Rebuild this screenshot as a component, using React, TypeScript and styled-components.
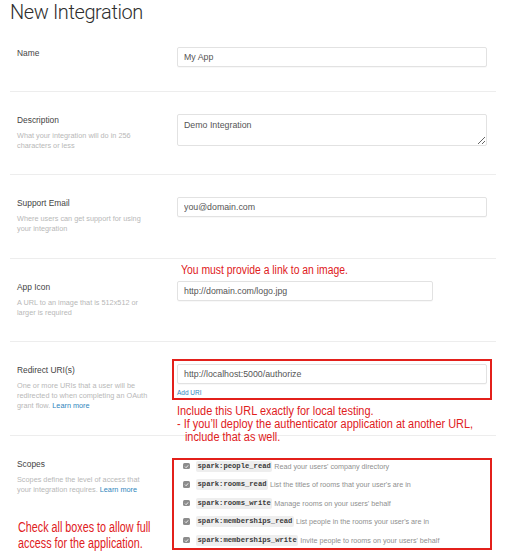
import styled, { createGlobalStyle } from "styled-components"

const GlobalStyle = createGlobalStyle`
  body {
    margin: 0;
    background: #fff;
    font-family: "Liberation Sans", Arial, sans-serif;
  }
`

const Page = styled.div`
  padding-left: 10px;
  width: 486px;
  height: 552px;
  overflow: hidden;
`

const Title = styled.h1`
  margin: 0;
  font-family: Roboto, "Liberation Sans", sans-serif;
  font-weight: 300;
  font-size: 20px;
  line-height: 25px;
  letter-spacing: -0.4px;
  color: #2e2e2e;
`

const Section = styled.div`
  display: grid;
  grid-template-columns: 167px 310px;
  padding: 22px 0 23.5px;
  border-bottom: 1px solid #ededed;
  &:last-child {
    border-bottom: none;
  }
`

const LabelCol = styled.div`
  position: relative;
  padding-left: 7px;
`

const Label = styled.div`
  font-size: 8.4px;
  line-height: 12px;
  color: #444;
`

const Hint = styled.div`
  margin-top: 5px;
  width: 136px;
  font-size: 7.3px;
  line-height: 10px;
  color: #b8b8b8;
`

const Link = styled.span`
  color: #2f86bd;
`

const Field = styled.div`
  position: relative;
`

const TextInput = styled.input<{ $width?: number }>`
  display: block;
  box-sizing: border-box;
  width: ${(p) => p.$width ?? 310}px;
  height: 20px;
  margin: 0;
  padding: 0 6px;
  border: 1px solid #e2e2e2;
  border-radius: 2px;
  box-shadow: 0 1px 1px rgba(0, 0, 0, 0.03);
  font-family: "Liberation Sans", Arial, sans-serif;
  font-size: 8.8px;
  color: #555;
  outline: none;
`

const TextArea = styled.textarea`
  display: block;
  box-sizing: border-box;
  width: 310px;
  height: 32px;
  margin: 0;
  padding: 5px 6px;
  border: 1px solid #e2e2e2;
  border-radius: 2px;
  font-family: "Liberation Sans", Arial, sans-serif;
  font-size: 8.8px;
  color: #555;
  outline: none;
`

const RedBox = styled.div`
  box-sizing: border-box;
  width: 320px;
  margin: -5px 0 0 -5px;
  padding: 3px 3px 1px;
  border: 2px solid #e3201b;
`

const AddUri = styled(Link)`
  display: block;
  margin-top: 4px;
  font-size: 6.5px;
  line-height: 9px;
`

// red annotations are narrow in the screenshot, so the regular face is squeezed
const Note = styled.div<{ $top: number; $left: number; $size: number; $lh: number; $scale: number }>`
  position: absolute;
  top: ${(p) => p.$top}px;
  left: ${(p) => p.$left}px;
  white-space: nowrap;
  transform: scaleX(${(p) => p.$scale});
  transform-origin: 0 0;
  font-family: "Liberation Sans", Arial, sans-serif;
  font-size: ${(p) => p.$size}px;
  line-height: ${(p) => p.$lh}px;
  color: #e0201c;
`

const NoteLine = styled.div<{ $indent?: number }>`
  padding-left: ${(p) => p.$indent ?? 0}px;
`

const ScopeBox = styled.div`
  box-sizing: border-box;
  width: 320px;
  margin: 0.5px 0 0 -5px;
  padding: 0 3px 2px 9px;
  border: 2px solid #e3201b;
  display: flex;
  flex-direction: column;
  gap: 6.5px;
`

const ScopeRow = styled.div`
  display: flex;
  align-items: center;
  height: 12px;
`

const Check = styled.span`
  display: flex;
  align-items: center;
  justify-content: center;
  width: 6.5px;
  height: 6.5px;
  margin-right: 6.5px;
  border-radius: 1.5px;
  background: #8c8c8c;
`

const Code = styled.code`
  padding: 1px 1.5px;
  border-radius: 2px;
  background: #eeeeee;
  font-family: "Liberation Mono", monospace;
  font-weight: bold;
  font-size: 7.2px;
  line-height: 9px;
  color: #3a3a3a;
`

const ScopeText = styled.span`
  margin-left: 2px;
  font-size: 7.2px;
  color: #8f8f8f;
`

const scopes = [
  ["spark:people_read", "Read your users' company directory"],
  ["spark:rooms_read", "List the titles of rooms that your user's are in"],
  ["spark:rooms_write", "Manage rooms on your users' behalf"],
  ["spark:memberships_read", "List people in the rooms your user's are in"],
  ["spark:memberships_write", "Invite people to rooms on your users' behalf"],
]

const Tick = () => (
  <svg width="5" height="5" viewBox="0 0 10 10">
    <path d="M2 5.2 L4.2 7.4 L8.2 2.8" fill="none" stroke="#fff" strokeWidth="1.8" />
  </svg>
)

const App = () => {
  return (
    <Page>
      <GlobalStyle />
      <Title>New Integration</Title>

      <Section>
        <LabelCol>
          <Label>Name</Label>
        </LabelCol>
        <Field>
          <TextInput readOnly defaultValue="My App" />
        </Field>
      </Section>

      <Section>
        <LabelCol>
          <Label>Description</Label>
          <Hint>What your integration will do in 256 characters or less</Hint>
        </LabelCol>
        <Field>
          <TextArea readOnly defaultValue="Demo Integration" />
        </Field>
      </Section>

      <Section>
        <LabelCol>
          <Label>Support Email</Label>
          <Hint>Where users can get support for using your integration</Hint>
        </LabelCol>
        <Field>
          <TextInput readOnly defaultValue="you@domain.com" />
        </Field>
      </Section>

      <Section>
        <LabelCol>
          <Label>App Icon</Label>
          <Hint>A URL to an image that is 512x512 or larger is required</Hint>
        </LabelCol>
        <Field>
          <Note $top={-17.5} $left={4} $size={12.5} $lh={14} $scale={0.83}>
            You must provide a link to an image.
          </Note>
          <TextInput $width={256} readOnly defaultValue="http://domain.com/logo.jpg" />
        </Field>
      </Section>

      <Section>
        <LabelCol>
          <Label>Redirect URI(s)</Label>
          <Hint>
            One or more URIs that a user will be redirected to when completing an OAuth grant flow.{" "}
            <Link>Learn more</Link>
          </Hint>
        </LabelCol>
        <Field>
          <RedBox>
            <TextInput readOnly defaultValue="http://localhost:5000/authorize" />
            <AddUri>Add URI</AddUri>
          </RedBox>
          <Note $top={40.5} $left={0} $size={12.5} $lh={13} $scale={0.875}>
            <NoteLine>Include this URL exactly for local testing.</NoteLine>
            <NoteLine>- If you’ll deploy the authenticator application at another URL,</NoteLine>
            <NoteLine $indent={9}>include that as well.</NoteLine>
          </Note>
        </Field>
      </Section>

      <Section>
        <LabelCol>
          <Label>Scopes</Label>
          <Hint>
            Scopes define the level of access that your integration requires. <Link>Learn more</Link>
          </Hint>
          <Note $top={61.5} $left={8} $size={14} $lh={16} $scale={0.77}>
            <NoteLine>Check all boxes to allow full</NoteLine>
            <NoteLine>access for the application.</NoteLine>
          </Note>
        </LabelCol>
        <Field>
          <ScopeBox>
            {scopes.map(([code, text]) => (
              <ScopeRow key={code}>
                <Check>
                  <Tick />
                </Check>
                <Code>{code}</Code>
                <ScopeText>{text}</ScopeText>
              </ScopeRow>
            ))}
          </ScopeBox>
        </Field>
      </Section>
    </Page>
  )
}

export default App
